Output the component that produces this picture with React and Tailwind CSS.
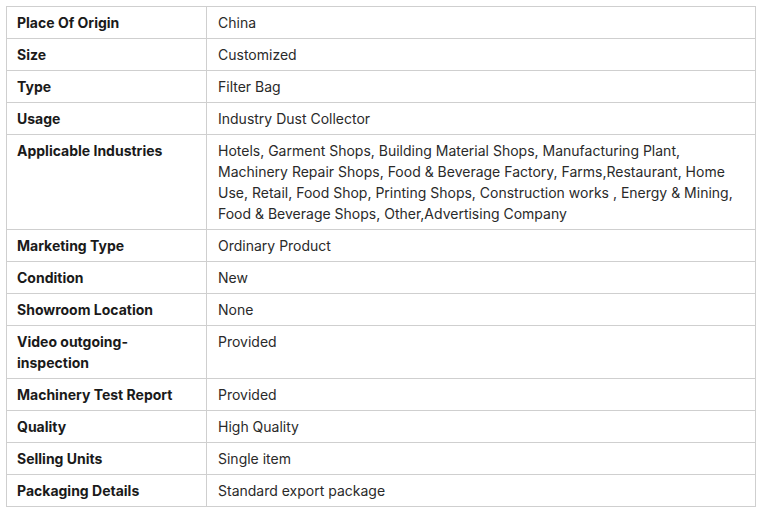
const rows = [
  ["Place Of Origin", "China"],
  ["Size", "Customized"],
  ["Type", "Filter Bag"],
  ["Usage", "Industry Dust Collector"],
  [
    "Applicable Industries",
    "Hotels, Garment Shops, Building Material Shops, Manufacturing Plant, Machinery Repair Shops, Food & Beverage Factory, Farms,Restaurant, Home Use, Retail, Food Shop, Printing Shops, Construction works , Energy & Mining, Food & Beverage Shops, Other,Advertising Company",
  ],
  ["Marketing Type", "Ordinary Product"],
  ["Condition", "New"],
  ["Showroom Location", "None"],
  ["Video outgoing-inspection", "Provided"],
  ["Machinery Test Report", "Provided"],
  ["Quality", "High Quality"],
  ["Selling Units", "Single item"],
  ["Packaging Details", "Standard export package"],
];

export default function App() {
  return (
    <div className="bg-white w-[762px] h-[512px] pt-[6px] pl-[6px]" style={{ fontFamily: "Inter, 'Noto Sans', sans-serif" }}>
      <table className="w-[750px] table-fixed border-collapse text-[14px] leading-[21px] text-[#222]">
        <colgroup>
          <col className="w-[200px]" />
          <col />
        </colgroup>
        <tbody>
          {rows.map(([k, v]) => (
            <tr key={k}>
              <td className="border border-[#cfcfcf] align-top font-bold pl-[10px] pr-[10px] py-[5px] text-[#1a1a1a]">{k}</td>
              <td className="border border-[#cfcfcf] align-top pl-[11px] pr-[10px] py-[5px] text-[#2a2a2a]">{v}</td>
            </tr>
          ))}
        </tbody>
      </table>
    </div>
  );
}
